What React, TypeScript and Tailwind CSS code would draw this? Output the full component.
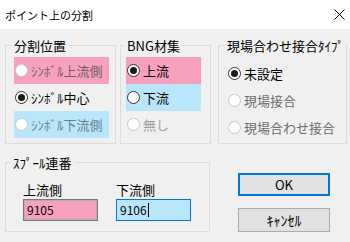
import React from "react";

const font = { fontFamily: '"Noto Sans CJK JP", "Noto Sans", sans-serif' };

const Radio = ({ checked = false, disabled = false }: { checked?: boolean; disabled?: boolean }) => (
  <span
    className={`mr-[3px] flex h-[13px] w-[13px] shrink-0 items-center justify-center rounded-full border bg-white ${
      disabled ? "border-[#c8c8c8]" : "border-[#333333]"
    }`}
  >
    {checked && <span className="h-[7px] w-[7px] rounded-full bg-[#1a1a1a]" />}
  </span>
);

interface RowProps {
  label: string;
  checked?: boolean;
  disabled?: boolean;
  bg?: string;
  color?: string;
}

const Row = ({ label, checked, disabled, bg = "", color = "text-black" }: RowProps) => (
  <div className={`flex h-[27px] items-center pl-[1px] ${bg}`}>
    <Radio checked={checked} disabled={disabled} />
    <span className={`text-[13px] leading-[13px] ${color}`}>{label}</span>
  </div>
);

const Group = ({
  title,
  width,
  indent,
  className = "",
  children,
}: {
  title: string;
  width: string;
  indent: string;
  className?: string;
  children: React.ReactNode;
}) => (
  <fieldset className={`border border-[#dcdcdc] ${width} ${className}`}>
    <legend className={`px-[2px] text-[13px] leading-[13px] text-black ${indent}`}>{title}</legend>
    {children}
  </fieldset>
);

export default function App() {
  return (
    <div className="flex h-[242px] w-[350px] flex-col overflow-hidden bg-[#f0f0f0]" style={font}>
      {/* title bar */}
      <div className="flex h-[29px] items-center justify-between bg-white pl-[5px] pr-[5px]">
        <span className="text-[11px] leading-[12px] text-black">ポイント上の分割</span>
        <svg width="11" height="11" viewBox="0 0 11 11">
          <path d="M0.5 0.5 L10.5 10.5 M10.5 0.5 L0.5 10.5" stroke="#000" strokeWidth="1" />
        </svg>
      </div>

      <div className="flex flex-col pl-[5px] pt-[10px]">
        {/* top row */}
        <div className="flex">
          <Group title="分割位置" width="w-[111px]" indent="ml-[6px]" className="h-[105px]">
            <div className="flex flex-col pl-[8px] pr-[6px] pt-[5px]">
              <Row label="ｼﾝﾎﾞﾙ上流側" disabled bg="bg-[#f7a1bf]" color="text-[#765c68]" />
              <Row label="ｼﾝﾎﾞﾙ中心" checked />
              <Row label="ｼﾝﾎﾞﾙ下流側" disabled bg="bg-[#b9e6fb]" color="text-[#67808b]" />
            </div>
          </Group>

          <Group title="BNG材集" width="w-[91px]" indent="ml-[4px]" className="ml-[4px] h-[105px]">
            <div className="flex flex-col pl-[5px] pr-[9px] pt-[5px]">
              <Row label="上流" checked bg="bg-[#f7a1bf]" />
              <Row label="下流" bg="bg-[#b9e6fb]" />
              <Row label="無し" disabled color="text-[#a0a0a0]" />
            </div>
          </Group>

          <Group title="現場合わせ接合ﾀｲﾌﾟ" width="w-[129px]" indent="ml-[6px]" className="ml-[7px] h-[105px]">
            <div className="flex flex-col pl-[8px] pt-[8px]">
              <Row label="未設定" checked />
              <Row label="現場接合" disabled color="text-[#6d6d6d]" />
              <Row label="現場合わせ接合" disabled color="text-[#6d6d6d]" />
            </div>
          </Group>
        </div>

        {/* bottom row */}
        <div className="mt-[12px] flex">
          <Group title="ｽﾌﾟｰﾙ連番" width="w-[205px]" indent="ml-[5px]" className="h-[76px]">
            <div className="flex pl-[17px] pt-[14px]">
              <div className="flex w-[93px] flex-col">
                <span className="text-[13px] leading-[13px] text-black">上流側</span>
                <div className="mt-[3px] flex h-[22px] w-[75px] items-center border border-[#7a7a7a] bg-[#f7a1bf] pl-[3px] shadow-[inset_0_0_0_1px_#b0b0b0]">
                  <span className="text-[12px] leading-[12px] text-black">9105</span>
                </div>
              </div>
              <div className="flex flex-col">
                <span className="text-[13px] leading-[13px] text-black">下流側</span>
                <div className="mt-[3px] flex h-[22px] w-[75px] items-center border border-[#0078d7] bg-[#b9e6fb] pl-[3px]">
                  <span className="text-[12px] leading-[12px] text-black">9106</span>
                  <span className="ml-[1px] h-[14px] w-[1px] bg-black" />
                </div>
              </div>
            </div>
          </Group>

          <div className="ml-[28px] flex w-[92px] flex-col pt-[17px]">
            <button className="flex h-[23px] items-center justify-center border-2 border-[#0078d7] bg-[#e1e1e1] text-[13px] leading-[13px] text-black">
              OK
            </button>
            <button className="mt-[12px] flex h-[24px] items-center justify-center border border-[#adadad] bg-[#e1e1e1] text-[14px] leading-[14px] text-black">
              ｷｬﾝｾﾙ
            </button>
          </div>
        </div>
      </div>
    </div>
  );
}
